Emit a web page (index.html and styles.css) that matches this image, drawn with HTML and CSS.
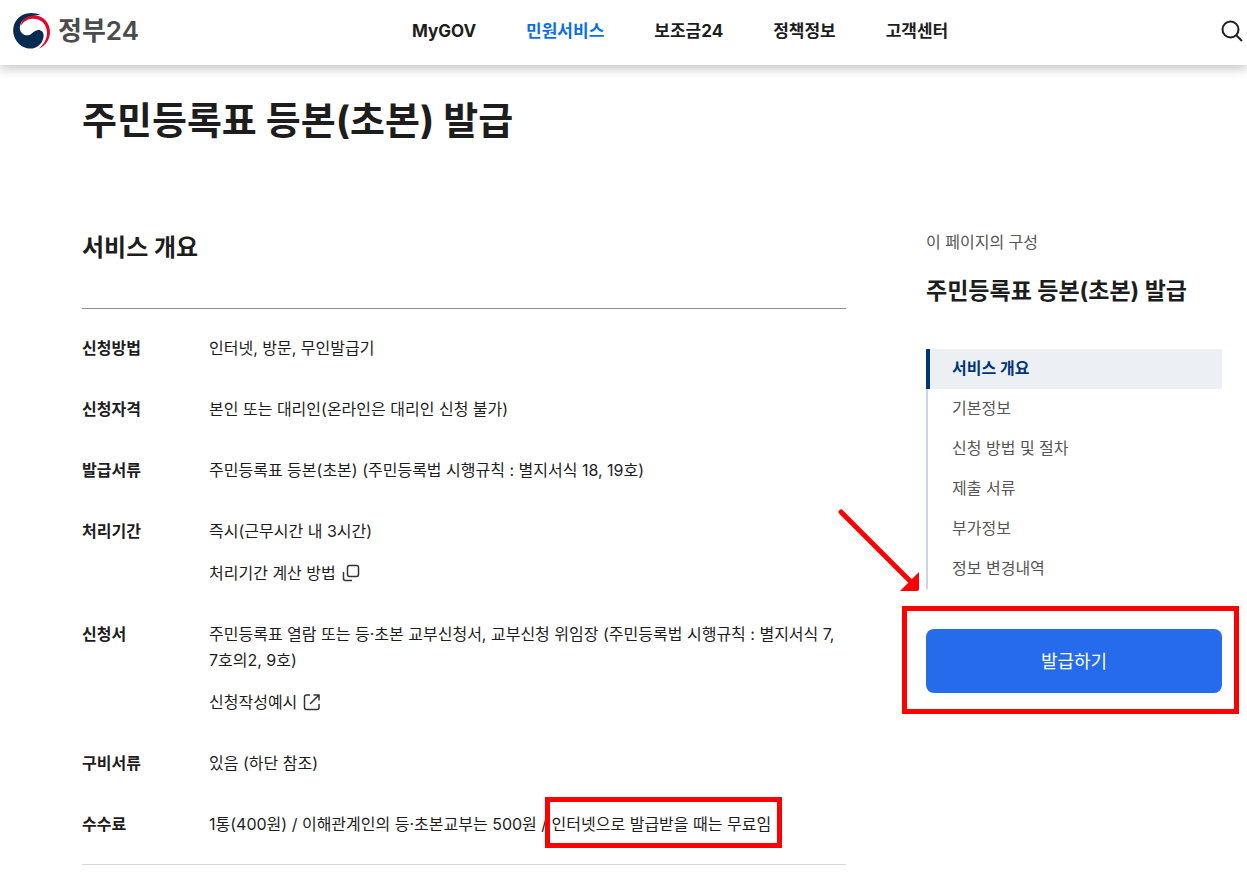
FILE: index.html
```html
<!DOCTYPE html>
<html lang="ko">
<head>
    <meta charset="UTF-8">
    <meta name="viewport" content="width=device-width, initial-scale=1">
    <title>주민등록표 등본(초본) 발급 | 정부24</title>
    <link rel="stylesheet" href="styles.css">
</head>
<body>

<header class="header">
    <a class="logo" href="#">
        <svg class="logo-mark" viewBox="0 0 111 108" aria-hidden="true">
            <path fill="#e4032e" d="M23 40 C25 18 45 6 66 7 C92 9 111 31 111 57 C111 80 97 99 77 107 C93 94 103 77 102 58 C101 34 85 17 60 17 C43 17 29 27 23 40Z"/>
            <path fill="#062b4f" d="M84 7 C52 -8 17 3 4 33 C-8 66 12 99 42 106 C68 111 90 94 92 68 C92 54 80 47 68 53 C56 59 54 67 42 67 C28 67 18 54 21 39 C25 20 43 9 60 8 C69 6 76 6 84 7Z"/>
        </svg>
        <span>정부24</span>
    </a>
    <nav class="nav">
        <a href="#">MyGOV</a>
        <a class="active" href="#">민원서비스</a>
        <a href="#">보조금24</a>
        <a href="#">정책정보</a>
        <a href="#">고객센터</a>
    </nav>
    <button class="search" type="button" aria-label="검색">
        <svg viewBox="0 0 22 22" aria-hidden="true">
            <circle cx="9.5" cy="9.5" r="8"/>
            <path d="M15 15l6 6"/>
        </svg>
    </button>
</header>

<div class="container">
    <h1>주민등록표 등본(초본) 발급</h1>

    <div class="columns">
        <main class="content">
            <h2>서비스 개요</h2>
            <dl class="info">
                <dt>신청방법</dt>
                <dd>인터넷, 방문, 무인발급기</dd>
                <dt>신청자격</dt>
                <dd>본인 또는 대리인(온라인은 대리인 신청 불가)</dd>
                <dt>발급서류</dt>
                <dd>주민등록표 등본(초본) (주민등록법 시행규칙 : 별지서식 18, 19호)</dd>
                <dt>처리기간</dt>
                <dd>
                    <p>즉시(근무시간 내 3시간)</p>
                    <a class="link" href="#">처리기간 계산 방법
                        <svg viewBox="0 0 18 18" aria-hidden="true">
                            <rect x="5.5" y="1.5" width="11" height="11" rx="2"/>
                            <path d="M1.5 8v6.5q0 2 2 2H10"/>
                        </svg>
                    </a>
                </dd>
                <dt>신청서</dt>
                <dd>
                    <p>주민등록표 열람 또는 등·초본 교부신청서, 교부신청 위임장 (주민등록법 시행규칙 : 별지서식 7, 7호의2, 9호)</p>
                    <a class="link" href="#">신청작성예시
                        <svg viewBox="0 0 18 18" aria-hidden="true">
                            <path d="M7 2H3.5q-2 0-2 2v10.5q0 2 2 2H14q2 0 2-2V11M10.5 2H16v5.5M16 2L7 11"/>
                        </svg>
                    </a>
                </dd>
                <dt>구비서류</dt>
                <dd>있음 (하단 참조)</dd>
                <dt>수수료</dt>
                <dd>1통(400원) / 이해관계인의 등·초본교부는 500원 / <span class="mark">인터넷으로 발급받을 때는 무료임</span></dd>
            </dl>
        </main>

        <aside class="side">
            <p class="side-label">이 페이지의 구성</p>
            <h2>주민등록표 등본(초본) 발급</h2>
            <ul class="toc">
                <li><a class="active" href="#">서비스 개요</a></li>
                <li><a href="#">기본정보</a></li>
                <li><a href="#">신청 방법 및 절차</a></li>
                <li><a href="#">제출 서류</a></li>
                <li><a href="#">부가정보</a></li>
                <li><a href="#">정보 변경내역</a></li>
            </ul>
            <div class="issue">
                <button class="issue-button" type="button">발급하기</button>
                <svg class="arrow" viewBox="0 0 84 84" aria-hidden="true">
                    <path d="M4 4L74 74" stroke="#f00" stroke-width="5" stroke-linecap="round"/>
                    <path d="M82 64v17q0 2-2 2H63z" fill="#f00"/>
                </svg>
            </div>
        </aside>
    </div>
</div>

</body>
</html>
```

FILE: styles.css
```css
* {
    box-sizing: border-box;
}
body {
    margin: 0;
    background-color: #ffffff;
    color: #1d1d1d;
    font-family: Inter, "Noto Sans CJK KR", sans-serif;
    font-size: 16px;
    line-height: 26px;
}
h1, h2, p, dl, dd, ul {
    margin: 0;
    padding: 0;
}
a {
    color: inherit;
    text-decoration: none;
}
button {
    border: none;
    font-family: inherit;
    cursor: pointer;
}

/* header */
.header {
    display: flex;
    align-items: center;
    height: 65px;
    padding: 0 4px 3px 13px;
    box-shadow: 0 4px 10px rgba(0, 0, 0, 0.22);
}
.logo {
    display: flex;
    align-items: center;
    gap: 8px;
    color: #4b4b4b;
    font-size: 26px;
    font-weight: 600;
}
.logo-mark {
    width: 37px;
    height: 36px;
}
.nav {
    display: flex;
    flex: 1;
    gap: 50px;
    margin-left: 273px;
    font-size: 17px;
    font-weight: 700;
}
.nav .active {
    color: #0a6fe8;
}
.search {
    padding: 0;
    background: none;
}
.search svg {
    display: block;
    width: 22px;
    height: 22px;
    fill: none;
    stroke: #1d1d1d;
    stroke-width: 2;
}

/* page body */
.container {
    padding: 31px 25px 0 82px;
}
h1 {
    font-size: 38px;
    line-height: 48px;
}
h2 {
    font-size: 24px;
    line-height: 36px;
}
.columns {
    display: flex;
    gap: 80px;
    margin-top: 86px;
}
.content {
    flex: 1;
}
.info {
    display: grid;
    grid-template-columns: 127px 1fr;
    row-gap: 35px;
    margin-top: 42px;
    padding: 26px 0 27px;
    border-top: 1px solid #8e8e8e;
    border-bottom: 1px solid #d8d8d8;
}
.info dt {
    font-weight: 700;
}
.link {
    display: flex;
    align-items: center;
    gap: 6px;
    margin-top: 16px;
}
.link svg {
    width: 18px;
    height: 18px;
    fill: none;
    stroke: #333333;
    stroke-width: 1.5;
}
.mark {
    position: relative;
}
.mark::after {
    content: "";
    position: absolute;
    inset: -17px -11px -14px -7px;
    border: 5px solid #ff0000;
}

/* side column */
.side {
    width: 296px;
}
.side-label {
    color: #555555;
    line-height: 24px;
}
.side h2 {
    margin-top: 19px;
    font-size: 23px;
    white-space: nowrap;
}
.toc {
    margin-top: 40px;
    list-style: none;
    color: #555555;
    line-height: 38px;
}
.toc a {
    display: block;
    padding: 0 0 2px 24px;
    border-left: 2px solid #cbd5e3;
}
.toc .active {
    padding-left: 22px;
    border-left: 4px solid #003675;
    background-color: #ecf0f5;
    color: #003675;
    font-weight: 700;
}
.issue {
    position: relative;
    margin-top: 40px;
}
.issue::after {
    content: "";
    position: absolute;
    inset: -23px -17px -21px -24px;
    border: 5px solid #ff0000;
    pointer-events: none;
}
.issue-button {
    display: block;
    width: 100%;
    height: 64px;
    padding-bottom: 4px;
    border-radius: 8px;
    background-color: #256bec;
    color: #ffffff;
    font-size: 18px;
}
.arrow {
    position: absolute;
    top: -121px;
    left: -89px;
    width: 84px;
    height: 84px;
    fill: none;
}
```
